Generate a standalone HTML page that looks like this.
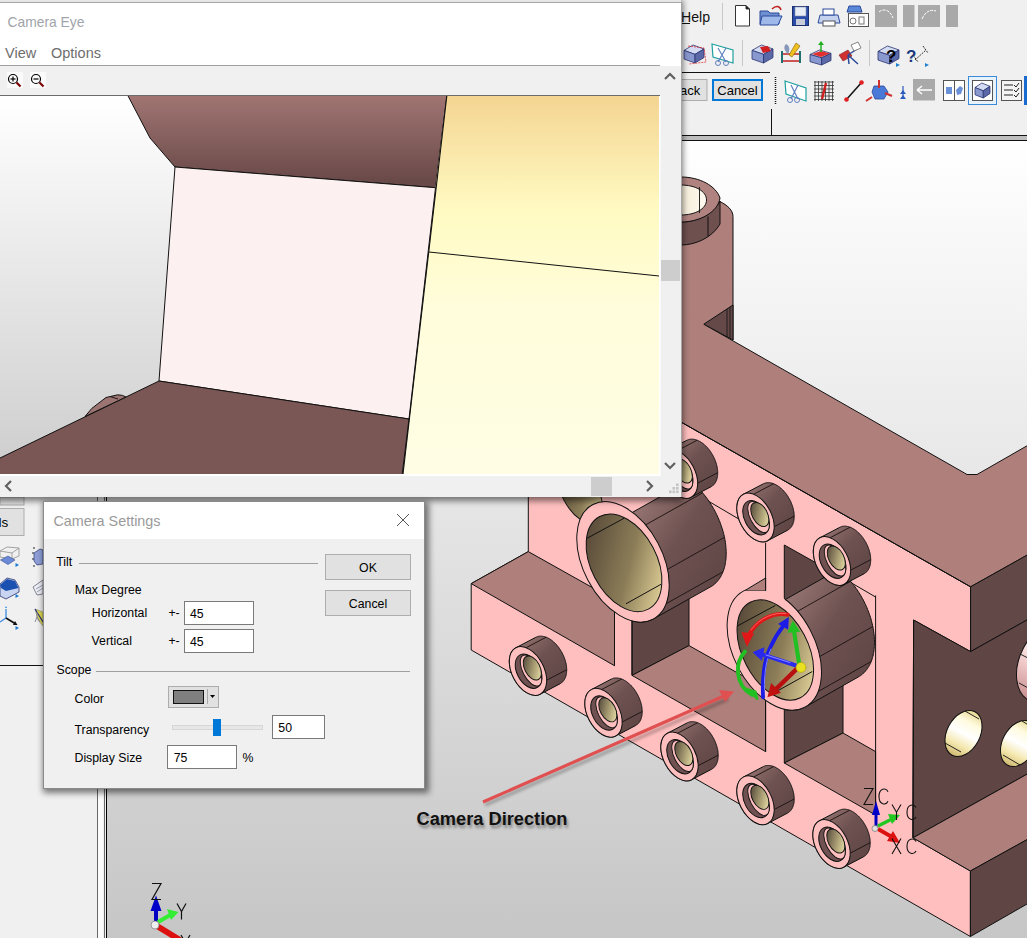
<!DOCTYPE html>
<html><head><meta charset="utf-8">
<style>
html,body{margin:0;padding:0;width:1027px;height:938px;overflow:hidden;background:#f0f0f0}
svg{display:block;position:absolute;left:0;top:0}
text{font-family:"Liberation Sans",sans-serif}
</style></head><body>
<svg width="1027" height="938" viewBox="0 0 1027 938">
<defs>
<linearGradient id="vpg" x1="0" y1="141" x2="0" y2="938" gradientUnits="userSpaceOnUse">
<stop offset="0" stop-color="#ffffff"/><stop offset="0.25" stop-color="#f1f1f1"/><stop offset="1" stop-color="#c6c6c6"/>
</linearGradient>
<linearGradient id="ceg" x1="0" y1="96" x2="0" y2="474" gradientUnits="userSpaceOnUse">
<stop offset="0" stop-color="#ffffff"/><stop offset="1" stop-color="#cdcdcd"/>
</linearGradient>
<linearGradient id="cebr" x1="0" y1="96" x2="0" y2="180" gradientUnits="userSpaceOnUse">
<stop offset="0" stop-color="#a07572"/><stop offset="1" stop-color="#6a4a49"/>
</linearGradient>
<linearGradient id="ceye" x1="0" y1="96" x2="0" y2="474" gradientUnits="userSpaceOnUse">
<stop offset="0" stop-color="#f4d592"/><stop offset="0.3" stop-color="#fffac2"/><stop offset="0.55" stop-color="#fffdda"/><stop offset="1" stop-color="#fffde4"/>
</linearGradient>
<linearGradient id="cyl" x1="0" y1="0" x2="1" y2="1">
<stop offset="0" stop-color="#a27f7c"/><stop offset="0.45" stop-color="#6e5251"/><stop offset="1" stop-color="#5a4241"/>
</linearGradient>
<linearGradient id="olv" x1="0.2" y1="0.1" x2="0.8" y2="0.95">
<stop offset="0" stop-color="#5a4c3a"/><stop offset="0.55" stop-color="#8c7d58"/><stop offset="1" stop-color="#e0d098"/>
</linearGradient>
<linearGradient id="olvs" x1="0.2" y1="0.1" x2="0.8" y2="0.95">
<stop offset="0" stop-color="#5c5040"/><stop offset="0.6" stop-color="#b0a578"/><stop offset="1" stop-color="#e8dca8"/>
</linearGradient>
<linearGradient id="crm" x1="0" y1="0" x2="1" y2="0">
<stop offset="0" stop-color="#f5ecd8"/><stop offset="1" stop-color="#fffaf0"/>
</linearGradient>
<linearGradient id="hol" x1="0" y1="0" x2="0" y2="1">
<stop offset="0" stop-color="#e8d890"/><stop offset="0.25" stop-color="#fffbe0"/><stop offset="0.5" stop-color="#ffffff"/><stop offset="0.75" stop-color="#f4e8b0"/><stop offset="1" stop-color="#d0b870"/>
</linearGradient>
<linearGradient id="holp" x1="0" y1="0" x2="0" y2="1">
<stop offset="0" stop-color="#f0e0c0"/><stop offset="0.3" stop-color="#ffffff"/><stop offset="0.65" stop-color="#f0c8c8"/><stop offset="1" stop-color="#c89090"/>
</linearGradient>
<filter id="shd" x="-10%" y="-10%" width="120%" height="120%"><feGaussianBlur stdDeviation="2.5"/></filter>
<filter id="shd2" x="-10%" y="-10%" width="120%" height="120%"><feGaussianBlur stdDeviation="3.2"/></filter>
</defs>

<!-- left panel & viewport -->
<rect x="0" y="0" width="1027" height="938" fill="#f0f0f0"/>
<rect x="107" y="141" width="920" height="797" fill="url(#vpg)"/>
<rect x="97" y="141" width="1" height="797" fill="#6a6a6a"/>
<rect x="98" y="141" width="5" height="797" fill="#fbfbfb"/>
<rect x="104" y="141" width="1" height="797" fill="#6a6a6a"/>
<rect x="106" y="141" width="1" height="797" fill="#000"/>
<rect x="0" y="665" width="43" height="1" fill="#111"/>

<!-- toolbar region -->
<rect x="681" y="0" width="346" height="135" fill="#f0f0f0"/>
<rect x="681" y="135" width="346" height="1" fill="#111"/>
<rect x="681" y="136" width="346" height="4" fill="#bdbdbd"/>
<rect x="681" y="140" width="346" height="1" fill="#111"/>
<g id="toolbar">
<text x="681" y="21.6" font-size="14.5" fill="#111" textLength="29" lengthAdjust="spacingAndGlyphs">Help</text>
<rect x="681" y="23" width="9" height="1" fill="#111"/>
<rect x="722" y="3" width="1" height="27" fill="#c8c8c8"/>
<!-- row1 -->
<path d="M735.5,5.5 L746,5.5 L749.5,9 L749.5,26 L735.5,26 Z" fill="#fff" stroke="#333" stroke-width="1"/>
<path d="M746,5.5 L746,9 L749.5,9" fill="#111" stroke="#333"/>
<path d="M760,11 L768,11 L770,13 L779,13 L779,24 L760,24 Z" fill="#6f8fd0" stroke="#2a4a9a"/>
<path d="M762,16 L782,16 L778,25 L760,25 Z" fill="#9fb8ea" stroke="#2a4a9a"/>
<path d="M772,9 C776,5 780,6 781,10" fill="none" stroke="#c02020" stroke-width="1.5"/>
<rect x="792.5" y="6.5" width="16" height="19" fill="#2b4ba8" stroke="#1a2f70"/>
<rect x="795" y="7" width="11" height="9" fill="#e8ecf4" stroke="#8090b0" stroke-width="0.6"/>
<rect x="796" y="19" width="9" height="6" fill="#c8ccd8"/>
<path d="M820,15 L838,15 L840,23 L818,23 Z" fill="#c4d2f0" stroke="#2a4a9a"/>
<rect x="823" y="9" width="11" height="6" fill="#fff" stroke="#2a4a9a"/>
<rect x="823" y="21" width="12" height="5" fill="#fff" stroke="#555"/>
<rect x="848.5" y="13.5" width="20" height="13" fill="#fff" stroke="#555"/>
<path d="M849,6 L860,6 L862,12 L847,12 Z" fill="#5a88d8" stroke="#2a4a9a"/>
<circle cx="853" cy="21" r="3" fill="none" stroke="#777"/>
<rect x="859" y="17" width="5" height="7" fill="none" stroke="#777"/>
<rect x="875" y="5" width="22" height="22" fill="#a9a9a9"/>
<path d="M879,12 C884,8 890,10 893,18" fill="none" stroke="#fff" stroke-width="1" stroke-dasharray="3,1"/>
<rect x="903" y="5" width="11.5" height="22" fill="#a9a9a9"/>
<rect x="918" y="5" width="22" height="22" fill="#a9a9a9"/>
<path d="M922,19 C925,12 930,9 936,11" fill="none" stroke="#fff" stroke-width="1" stroke-dasharray="3,1"/>
<rect x="946" y="5" width="12" height="22" fill="#a9a9a9"/>
<!-- row2 -->
<path d="M684,50.4 L693.0,45 L704,48.96 L695.0,54.36 Z" fill="#d4dcf4" stroke="#2a3470" stroke-width="0.8"/><path d="M684,50.4 L695.0,54.36 L695.0,63 L684,59.04 Z" fill="#8a98d0" stroke="#2a3470" stroke-width="0.8"/><path d="M695.0,54.36 L704,48.96 L704,57.6 L695.0,63 Z" fill="#5a68a8" stroke="#2a3470" stroke-width="0.8"/>
<path d="M688,46 L704,48 L706,62 L689,64" fill="none" stroke="#e03030" stroke-width="0.8" stroke-dasharray="2,1"/>
<path d="M712,44 L733,50 L733,63 L713,57 Z" fill="#fff" stroke="#20a0a0" stroke-width="1.2"/>
<path d="M718,48 L726,62 M726,48 L718,62" stroke="#6080c0" stroke-width="1.2"/>
<circle cx="718" cy="63" r="2.5" fill="none" stroke="#6080c0"/><circle cx="726" cy="63" r="2.5" fill="none" stroke="#6080c0"/>
<rect x="742" y="40" width="1" height="26" fill="#c8c8c8"/>
<path d="M752,50.4 L761.45,45 L773,48.96 L763.55,54.36 Z" fill="#d4dcf4" stroke="#2a3470" stroke-width="0.8"/><path d="M752,50.4 L763.55,54.36 L763.55,63 L752,59.04 Z" fill="#8a98d0" stroke="#2a3470" stroke-width="0.8"/><path d="M763.55,54.36 L773,48.96 L773,57.6 L763.55,63 Z" fill="#5a68a8" stroke="#2a3470" stroke-width="0.8"/><path d="M760,47 L768,46 L771,51 L763,53 Z" fill="#d02020"/>
<path d="M781,54 L800,54 M781,61 L800,61" stroke="#c02020" stroke-width="1.5"/>
<rect x="781" y="51" width="2" height="12" fill="#207070"/><rect x="799" y="51" width="2" height="12" fill="#207070"/>
<path d="M786,44 C782,48 786,52 788,54 C790,50 790,46 786,44" fill="#8898b8"/>
<path d="M796,43 L800,46 L792,57 L789,55 Z" fill="#f0c020" stroke="#806000" stroke-width="0.6"/>
<path d="M810,54.5 L819.45,50 L831,53.3 L821.55,57.8 Z" fill="#d4dcf4" stroke="#2a3470" stroke-width="0.8"/><path d="M810,54.5 L821.55,57.8 L821.55,65 L810,61.7 Z" fill="#8a98d0" stroke="#2a3470" stroke-width="0.8"/><path d="M821.55,57.8 L831,53.3 L831,60.5 L821.55,65 Z" fill="#5a68a8" stroke="#2a3470" stroke-width="0.8"/><path d="M812,54 L821,51 L830,53.5 L821,57 Z" fill="#e03030"/>
<path d="M821,52 L821,43" stroke="#22b022" stroke-width="1.5"/><path d="M818,45 L821,41 L824,45 Z" fill="#22b022"/>
<path d="M839,55 L848,50 L852,56 L843,61 Z" fill="#d03030" stroke="#802020" stroke-width="0.6"/>
<path d="M848,55 L857,49 M848,55 L849,64 M848,55 L858,64" stroke="#2a4a9a" stroke-width="1.5"/>
<path d="M851,45 L858,42 L861,48 L854,51 Z" fill="#fff" stroke="#555" stroke-width="0.7"/>
<rect x="869" y="40" width="1" height="26" fill="#c8c8c8"/>
<path d="M878,51.4 L887.45,46 L899,49.96 L889.55,55.36 Z" fill="#d4dcf4" stroke="#2a3470" stroke-width="0.8"/><path d="M878,51.4 L889.55,55.36 L889.55,64 L878,60.04 Z" fill="#8a98d0" stroke="#2a3470" stroke-width="0.8"/><path d="M889.55,55.36 L899,49.96 L899,58.6 L889.55,64 Z" fill="#5a68a8" stroke="#2a3470" stroke-width="0.8"/>
<text x="886" y="62" font-size="17" font-weight="bold" fill="#000">?</text>
<path d="M896,63 L900,65 L896,67 Z" fill="#2080d0"/>
<text x="906" y="62" font-size="17" font-weight="bold" fill="#1a3a80">?</text>
<path d="M915,60 L926,50 M913,55 L918,62 M923,46 L928,53" stroke="#333" stroke-width="1" stroke-dasharray="2,1"/>
<path d="M925,63 L929,65 L925,67 Z" fill="#2080d0"/>
<!-- row3 -->
<rect x="681" y="72" width="89" height="1" fill="#111"/>
<rect x="681" y="79.5" width="26" height="21" fill="#e1e1e1" stroke="#adadad"/>
<text x="680" y="95" font-size="13" fill="#000">ack</text>
<rect x="713" y="80" width="49" height="20" fill="#e1e1e1" stroke="#0078d7" stroke-width="2"/>
<text x="737.5" y="95" font-size="13" fill="#000" text-anchor="middle">Cancel</text>
<rect x="771" y="109" width="1" height="27" fill="#111"/>
<path d="M775.5,77 L775.5,104" stroke="#111" stroke-width="1.5" stroke-dasharray="1,1"/>
<path d="M785,81 L806,88 L806,101 L786,94 Z" fill="#fff" stroke="#20a0a0" stroke-width="1.2"/>
<path d="M791,85 L798,99 M798,85 L791,99" stroke="#6080c0" stroke-width="1.2"/>
<circle cx="790" cy="100" r="2.5" fill="none" stroke="#6080c0"/><circle cx="797" cy="100" r="2.5" fill="none" stroke="#6080c0"/>
<g stroke="#333" stroke-width="0.8">
<path d="M814,82 L834,82 M814,85.5 L834,85.5 M814,89 L834,89 M814,92.5 L834,92.5 M814,96 L834,96 M814,99.5 L834,99.5"/>
<path d="M815,81 L815,101 M818.5,81 L818.5,101 M822,81 L822,101 M825.5,81 L825.5,101 M829,81 L829,101 M832.5,81 L832.5,101"/>
</g>
<path d="M826,83 L822,99" stroke="#d02020" stroke-width="2.5"/>
<path d="M846,100 L862,82" stroke="#111" stroke-width="1.5"/>
<circle cx="846.5" cy="99.5" r="2.3" fill="#e02020"/><circle cx="861.5" cy="82.5" r="2.3" fill="#e02020"/>
<path d="M874,86 L884,86 L888,92 L884,99 L875,99 L872,92 Z" fill="#4a7ad8" stroke="#2a4a9a" stroke-width="0.8"/>
<path d="M879,80 L879,88 M872,97 L866,101 M885,93 L892,96" stroke="#d03030" stroke-width="2"/>
<path d="M903,90 L900,94 L906,94 Z M903,95 L900,99 L906,99 Z" fill="#2a5ac0"/>
<path d="M903,86 L903,96" stroke="#2a5ac0" stroke-width="1.2"/>
<rect x="913" y="79" width="22" height="21.5" fill="#a9a9a9"/>
<path d="M917,90 L932,90 M917,90 L922,86 M917,90 L922,94" stroke="#fff" stroke-width="1.5"/>
<rect x="943.5" y="80.5" width="21" height="20" fill="#fff" stroke="#555"/>
<rect x="954" y="80" width="1" height="21" fill="#555"/>
<rect x="946" y="87" width="6" height="7" fill="#6a90d8"/><path d="M956,90 L960,86 L963,88 L961,94 L957,95 Z" fill="#6a90d8"/>
<rect x="968.5" y="76.5" width="28" height="28" fill="#e8f2fb" stroke="#3a8ad8" stroke-width="1"/>
<rect x="972.5" y="80.5" width="20" height="20" fill="#fff" stroke="#555"/>
<path d="M975,87.5 L981.75,83 L990,86.3 L983.25,90.8 Z" fill="#d4dcf4" stroke="#2a3470" stroke-width="0.8"/><path d="M975,87.5 L983.25,90.8 L983.25,98 L975,94.7 Z" fill="#8a98d0" stroke="#2a3470" stroke-width="0.8"/><path d="M983.25,90.8 L990,86.3 L990,93.5 L983.25,98 Z" fill="#5a68a8" stroke="#2a3470" stroke-width="0.8"/>
<rect x="1001.5" y="80.5" width="20" height="20" fill="#f4f4f4" stroke="#555"/>
<path d="M1004,85 L1013,85 M1004,90 L1013,90 M1004,95 L1013,95" stroke="#222" stroke-width="1.2"/>
<path d="M1014,85 L1016,87 L1019,83 M1014,90 L1016,92 L1019,88 M1014,95 L1016,97 L1019,93" stroke="#222" stroke-width="1" fill="none"/>
<rect x="1024" y="76" width="3" height="29" fill="#1a6ad0"/>
</g>

<!-- MODEL -->
<g id="model">
<polygon points="528.3,480.0 528.3,551.6 471.2,583.6 471.2,650.0 970.4,936.5 970.4,871.0 913.0,837.8 913.6,620.0 970.6,651.6 970.6,586.8 681.0,422.0 681.0,480.0" fill="#ffbfbf" stroke="#111" stroke-width="1"/>
<polygon points="681.0,290.0 703.8,324.2 964.8,473.2 967.0,474.5 977.0,474.5 1027.0,445.8 1027.0,555.2 970.6,586.8 681.0,422.0" fill="#ae7f7b"/>
<polyline points="703.8,324.2 964.8,473.2 967.0,474.5 977.0,474.5 1027.0,445.8" fill="none" stroke="#111" stroke-width="1"/>
<polyline points="1027.0,555.2 970.6,586.8 681.0,422.0" fill="none" stroke="#111" stroke-width="1"/>
<path d="M681,177 C700,177 716,186 720,198 L720,201.6 C727,205 733,210 733,216.5 L733,340 L703.8,324.2 L681,312 Z" fill="#ae7f7b"/>
<path d="M720,201.6 C727,205 733,210 733,216.5 L733,340" fill="none" stroke="#111" stroke-width="1"/>
<polygon points="703.8,324.2 733,305 733,340" fill="#654948" stroke="#111" stroke-width="1"/>
<g stroke="#111" stroke-width="0.8"><line x1="727" y1="309" x2="727" y2="337"/><line x1="730" y1="307" x2="730" y2="339"/></g>
<path d="M681,222 C695,222 712,216 720,201 L720,224 C712,238 695,245 681,245 Z" fill="#6e504f" stroke="#111" stroke-width="1"/>
<line x1="708" y1="216.5" x2="708" y2="236.5" stroke="#111" stroke-width="1"/>
<path d="M681,177 C700,177 716,186 720,198 C718,212 700,222 681,222 Z" fill="#b08380" stroke="#111" stroke-width="1"/>
<path d="M681,185 C695,185 706.5,191 706.5,200 C706.5,209 695,215 681,215 Z" fill="url(#crm)" stroke="#111" stroke-width="1"/>
<line x1="699.5" y1="187" x2="699.5" y2="213" stroke="#111" stroke-width="0.9"/>
<line x1="681" y1="422" x2="970.6" y2="586.8" stroke="#111" stroke-width="1"/>
<polygon points="970.6,586.8 1030.0,553.5 1030.0,618.3 970.6,651.6" fill="#624846" stroke="#111" stroke-width="1"/>
<polygon points="913.6,620.0 970.6,651.6 1030.0,618.3 1030.0,772.5 913.0,837.8" fill="#5f4544" stroke="#111" stroke-width="1"/>
<ellipse cx="963.5" cy="733.5" rx="16.5" ry="24.5" transform="rotate(27.7 963.5 733.5)" fill="url(#hol)" stroke="#111" stroke-width="1"/>
<path d="M965,711 L979,719 M945,743 L961,752" stroke="#111" stroke-width="0.9"/>
<ellipse cx="1019.0" cy="743.5" rx="16.5" ry="24.5" transform="rotate(27.7 1019.0 743.5)" fill="url(#hol)" stroke="#111" stroke-width="1"/>
<path d="M1003,755 L1020,765 M1022,721 L1030,726" stroke="#111" stroke-width="0.9"/>
<ellipse cx="1050.0" cy="662.0" rx="30.0" ry="44.0" transform="rotate(27.7 1050.0 662.0)" fill="url(#holp)" stroke="#111" stroke-width="1"/>
<path d="M1020,654 L1030,659 M1019,683 L1030,689" stroke="#111" stroke-width="0.9"/>
<polygon points="913.0,837.8 1030.0,772.5 1030.0,838.0 970.4,871.0" fill="#ae7f7b" stroke="#111" stroke-width="1"/>
<polygon points="970.4,871.0 1030.0,838.0 1030.0,902.3 970.4,936.5" fill="#5f4544" stroke="#111" stroke-width="1"/>
<polygon points="471.2,583.6 528.3,551.6 614.5,600.0 614.5,665.7" fill="#ae7f7b" stroke="#111" stroke-width="1"/>
<polygon points="632.0,560.0 689.0,560.0 689.0,645.6 632.0,675.4" fill="#5f4544" stroke="#111" stroke-width="1"/>
<polygon points="632.0,675.4 689.0,645.6 765.6,688.7 765.6,751.6" fill="#ae7f7b" stroke="#111" stroke-width="1"/>
<line x1="765.6" y1="542.7" x2="765.6" y2="752" stroke="#111" stroke-width="1"/>
<line x1="698" y1="495" x2="738.4" y2="518.8" stroke="#111" stroke-width="1"/>
<polygon points="784.3,545.0 843.0,578.0 843.0,733.0 784.3,763.0" fill="#5f4544" stroke="#111" stroke-width="1"/>
<polygon points="784.3,763.0 843.0,733.0 875.6,751.6 875.6,815.0" fill="#ae7f7b" stroke="#111" stroke-width="1"/>
<line x1="875.6" y1="595.5" x2="875.6" y2="815" stroke="#111" stroke-width="1"/>
<line x1="843" y1="578" x2="875.6" y2="597" stroke="#111" stroke-width="1"/>
<line x1="913.6" y1="620" x2="913" y2="837.8" stroke="#111" stroke-width="1"/>
<line x1="614.5" y1="600" x2="614.5" y2="665.7" stroke="#111" stroke-width="1"/>
<line x1="632" y1="600" x2="632" y2="675.4" stroke="#111" stroke-width="1"/>
<ellipse cx="580.0" cy="492.0" rx="18.0" ry="34.0" transform="rotate(-27.7 580.0 492.0)" fill="url(#olv)" stroke="#111" stroke-width="1"/>
<polygon points="632.5,512.3 689.5,480.3 690.7,481.2 691.8,482.2 693.0,483.1 694.2,484.2 695.3,485.2 696.4,486.3 697.6,487.4 698.7,488.5 699.8,489.7 700.9,490.9 701.9,492.1 703.0,493.3 704.0,494.6 705.1,495.9 706.1,497.2 707.1,498.5 708.0,499.9 709.0,501.3 709.9,502.7 710.8,504.1 711.7,505.5 712.6,507.0 713.4,508.4 714.3,509.9 715.1,511.4 715.8,512.9 716.6,514.4 717.3,515.9 718.0,517.5 718.7,519.0 719.3,520.6 720.0,522.1 720.5,523.7 721.1,525.3 721.6,526.9 722.2,528.4 722.6,530.0 723.1,531.6 723.5,533.2 723.9,534.7 724.3,536.3 724.6,537.9 724.9,539.4 725.2,541.0 725.4,542.5 725.6,544.1 725.8,545.6 725.9,547.1 726.0,548.6 726.1,550.1 726.2,551.6 726.2,553.0 726.2,554.5 726.1,555.9 726.1,557.3 726.0,558.7 725.8,560.1 725.6,561.4 725.4,562.8 725.2,564.1 725.0,565.4 724.7,566.6 724.3,567.8 724.0,569.1 723.6,570.2 723.2,571.4 722.7,572.5 722.3,573.6 721.7,574.7 721.2,575.7 720.7,576.7 720.1,577.7 719.5,578.6 718.8,579.5 718.1,580.4 717.4,581.2 716.7,582.0 716.0,582.8 715.2,583.5 714.4,584.2 713.6,584.9 712.8,585.5 711.9,586.1 711.0,586.6 654.0,618.6 653.1,619.1 652.2,619.6 651.2,620.0 650.2,620.4 649.3,620.7 648.3,621.0 647.2,621.3 646.2,621.5 645.1,621.7 644.1,621.8 643.0,621.9 641.9,622.0 640.8,622.0 639.7,622.0 638.5,621.9 637.4,621.8 636.2,621.6 635.1,621.5 633.9,621.2 632.7,621.0" fill="url(#cyl)" stroke="#111" stroke-width="1"/>
<line x1="645.6" y1="524.9" x2="702.6" y2="492.9" stroke="#1a1010" stroke-width="0.9"/>
<line x1="667.5" y1="569.3" x2="724.5" y2="537.3" stroke="#1a1010" stroke-width="0.9"/>
<line x1="666.0" y1="603.8" x2="723.0" y2="571.8" stroke="#1a1010" stroke-width="0.9"/>
<ellipse cx="623.0" cy="561.8" rx="39.6" ry="64.7" transform="rotate(-27.7 623.0 561.8)" fill="#ffbfbf" stroke="#111" stroke-width="1"/>
<ellipse cx="624.0" cy="562.8" rx="32.8" ry="52.3" transform="rotate(-27.7 624.0 562.8)" fill="url(#olv)" stroke="#111" stroke-width="1"/>
<line x1="586.0" y1="538.8" x2="624.0" y2="518.3" stroke="#111" stroke-width="1"/>
<line x1="626.0" y1="603.8" x2="661.0" y2="584.3" stroke="#111" stroke-width="1"/>
<polygon points="785.2,709.4 785.4,599.5 838.4,569.5 839.6,570.5 840.8,571.5 842.0,572.5 843.2,573.5 844.3,574.6 845.5,575.7 846.6,576.9 847.7,578.1 848.8,579.3 849.9,580.5 851.0,581.8 852.1,583.1 853.1,584.4 854.1,585.7 855.1,587.0 856.1,588.4 857.1,589.8 858.0,591.2 859.0,592.7 859.9,594.1 860.8,595.6 861.6,597.1 862.5,598.6 863.3,600.1 864.1,601.6 864.8,603.2 865.6,604.7 866.3,606.3 867.0,607.9 867.6,609.5 868.2,611.0 868.8,612.6 869.4,614.2 870.0,615.8 870.5,617.4 871.0,619.0 871.4,620.6 871.8,622.2 872.2,623.8 872.6,625.4 872.9,627.0 873.2,628.6 873.5,630.2 873.7,631.8 873.9,633.3 874.1,634.9 874.3,636.4 874.4,637.9 874.4,639.5 874.5,641.0 874.5,642.4 874.5,643.9 874.4,645.4 874.3,646.8 874.2,648.2 874.1,649.6 873.9,651.0 873.7,652.4 873.4,653.7 873.2,655.0 872.9,656.3 872.5,657.5 872.2,658.8 871.8,660.0 871.3,661.1 870.9,662.3 870.4,663.4 869.9,664.5 869.3,665.6 868.7,666.6 868.1,667.6 867.5,668.5 866.8,669.5 866.1,670.3 865.4,671.2 864.7,672.0 863.9,672.8 863.1,673.5 862.3,674.3 861.5,674.9 860.6,675.6 859.7,676.1 858.8,676.7 805.8,706.7 804.9,707.2 803.9,707.7 802.9,708.1 801.9,708.5 800.9,708.9 799.9,709.2 798.9,709.5 797.8,709.7 796.7,709.9 795.6,710.0 794.5,710.1 793.4,710.2 792.3,710.2 791.1,710.2 789.9,710.1 788.8,710.0 787.6,709.9 786.4,709.7" fill="url(#cyl)" stroke="#111" stroke-width="1"/>
<line x1="797.6" y1="611.3" x2="850.6" y2="581.3" stroke="#1a1010" stroke-width="0.9"/>
<line x1="819.8" y1="656.5" x2="872.8" y2="626.5" stroke="#1a1010" stroke-width="0.9"/>
<line x1="818.2" y1="691.5" x2="871.2" y2="661.5" stroke="#1a1010" stroke-width="0.9"/>
<clipPath id="cutc"><path clip-rule="evenodd" d="M0,0 H1100 V1000 H0 Z M745,572 V602 H784.6 V572 Z"/></clipPath>
<ellipse cx="774.3" cy="649.0" rx="40.6" ry="65.7" transform="rotate(-27.7 774.3 649.0)" fill="#ffbfbf"/>
<g clip-path="url(#cutc)"><ellipse cx="774.3" cy="649.0" rx="40.6" ry="65.7" transform="rotate(-27.7 774.3 649.0)" fill="none" stroke="#111" stroke-width="1"/></g>
<line x1="745" y1="590.2" x2="765.6" y2="590.2" stroke="#111" stroke-width="1"/>
<ellipse cx="775.3" cy="650.0" rx="32.6" ry="54.0" transform="rotate(-27.7 775.3 650.0)" fill="url(#olv)" stroke="#111" stroke-width="1"/>
<line x1="737.3" y1="626.0" x2="775.3" y2="605.5" stroke="#111" stroke-width="1"/>
<line x1="777.3" y1="691.0" x2="812.3" y2="671.5" stroke="#111" stroke-width="1"/>
<polygon points="509.3,661.6 509.3,661.0 509.3,660.5 509.4,659.9 509.4,659.3 509.5,658.8 509.5,658.2 509.6,657.7 509.7,657.1 509.8,656.6 509.9,656.1 510.1,655.6 510.2,655.1 510.4,654.7 510.5,654.2 510.7,653.7 510.9,653.3 511.1,652.9 511.3,652.4 511.6,652.0 511.8,651.6 512.0,651.3 512.3,650.9 512.6,650.5 512.9,650.2 513.1,649.9 513.4,649.6 513.8,649.3 514.1,649.0 514.4,648.7 514.8,648.5 515.1,648.2 515.5,648.0 515.8,647.8 535.8,637.3 536.2,637.1 536.6,637.0 537.0,636.8 537.4,636.7 537.8,636.5 538.2,636.4 538.6,636.3 539.0,636.3 539.5,636.2 539.9,636.2 540.4,636.2 540.8,636.2 541.3,636.2 541.7,636.2 542.2,636.2 542.7,636.3 543.1,636.4 543.6,636.5 544.1,636.6 544.6,636.7 545.0,636.8 545.5,637.0 546.0,637.2 546.5,637.4 547.0,637.6 547.5,637.8 548.0,638.0 548.5,638.3 548.9,638.6 549.4,638.8 549.9,639.1 550.4,639.4 550.9,639.8 551.4,640.1 551.9,640.5 552.3,640.8 552.8,641.2 553.3,641.6 553.7,642.0 554.2,642.5 554.7,642.9 555.1,643.3 555.6,643.8 556.0,644.3 556.5,644.7 556.9,645.2 557.3,645.7 557.7,646.2 558.2,646.8 558.6,647.3 559.0,647.8 559.4,648.4 559.7,648.9 560.1,649.5 560.5,650.1 560.8,650.7 561.2,651.3 561.5,651.8 561.9,652.4 562.2,653.0 562.5,653.7 562.8,654.3 563.1,654.9 563.4,655.5 563.7,656.1 563.9,656.8 564.2,657.4 564.4,658.0 564.6,658.7 564.9,659.3 565.1,659.9 565.3,660.6 565.4,661.2 565.6,661.8 565.8,662.5 565.9,663.1 566.1,663.8 566.2,664.4 566.3,665.0 566.4,665.6 566.5,666.3 566.5,666.9 566.6,667.5 566.6,668.1 566.7,668.7 566.7,669.3 566.7,669.9 566.7,670.5 566.7,671.0 566.6,671.6 566.6,672.2 566.5,672.7 566.5,673.3 566.4,673.8 566.3,674.4 566.2,674.9 566.1,675.4 565.9,675.9 565.8,676.4 565.6,676.8 565.5,677.3 565.3,677.8 565.1,678.2 564.9,678.6 564.7,679.1 564.4,679.5 564.2,679.9 564.0,680.2 563.7,680.6 563.4,681.0 563.1,681.3 562.9,681.6 562.6,681.9 562.2,682.2 561.9,682.5 561.6,682.8 561.2,683.0 560.9,683.3 560.5,683.5 560.2,683.7 540.2,694.2 539.8,694.4 539.4,694.5 539.0,694.7 538.6,694.8 538.2,695.0 537.8,695.1 537.4,695.2 537.0,695.2 536.5,695.3 536.1,695.3 535.6,695.3 535.2,695.3 534.7,695.3 534.3,695.3 533.8,695.3 533.3,695.2 532.9,695.1 532.4,695.0 531.9,694.9 531.4,694.8 531.0,694.7 530.5,694.5 530.0,694.3 529.5,694.1 529.0,693.9 528.5,693.7 528.0,693.5 527.5,693.2 527.1,692.9 526.6,692.7 526.1,692.4 525.6,692.1 525.1,691.7 524.6,691.4 524.1,691.0 523.7,690.7 523.2,690.3 522.7,689.9 522.3,689.5 521.8,689.0 521.3,688.6 520.9,688.2 520.4,687.7 520.0,687.2 519.5,686.8 519.1,686.3 518.7,685.8 518.3,685.3 517.8,684.7 517.4,684.2 517.0,683.7 516.6,683.1 516.3,682.6 515.9,682.0 515.5,681.4 515.2,680.8 514.8,680.2 514.5,679.7 514.1,679.1 513.8,678.5 513.5,677.8 513.2,677.2 512.9,676.6 512.6,676.0 512.3,675.4 512.1,674.7 511.8,674.1 511.6,673.5 511.4,672.8 511.1,672.2 510.9,671.6 510.7,670.9 510.6,670.3 510.4,669.7 510.2,669.0 510.1,668.4 509.9,667.7 509.8,667.1 509.7,666.5 509.6,665.9 509.5,665.2 509.5,664.6 509.4,664.0 509.4,663.4 509.3,662.8 509.3,662.2" fill="url(#cyl)" stroke="#111" stroke-width="1"/>
<line x1="526.2" y1="647.7" x2="546.2" y2="637.2" stroke="#1a1010" stroke-width="0.9"/>
<line x1="546.7" y1="680.2" x2="566.7" y2="669.7" stroke="#1a1010" stroke-width="0.9"/>
<ellipse cx="528.0" cy="671.0" rx="16.0" ry="26.2" transform="rotate(-27.7 528.0 671.0)" fill="#ffbfbf" stroke="#111" stroke-width="1"/>
<ellipse cx="528.6" cy="671.2" rx="11.6" ry="18.4" transform="rotate(-27.7 528.6 671.2)" fill="#6e5150" stroke="#111" stroke-width="1"/>
<ellipse cx="531.0" cy="670.5" rx="8.2" ry="17.0" transform="rotate(-27.7 531.0 670.5)" fill="#ffbfbf" stroke="#111" stroke-width="0.9"/>
<ellipse cx="532.3" cy="668.0" rx="7.6" ry="13.0" transform="rotate(-27.7 532.3 668.0)" fill="url(#olvs)" stroke="#111" stroke-width="0.9"/>
<polygon points="584.8,703.4 584.8,702.8 584.8,702.3 584.9,701.7 584.9,701.1 585.0,700.6 585.0,700.0 585.1,699.5 585.2,698.9 585.3,698.4 585.4,697.9 585.6,697.4 585.7,696.9 585.9,696.5 586.0,696.0 586.2,695.5 586.4,695.1 586.6,694.7 586.8,694.2 587.1,693.8 587.3,693.4 587.5,693.1 587.8,692.7 588.1,692.3 588.4,692.0 588.6,691.7 588.9,691.4 589.3,691.1 589.6,690.8 589.9,690.5 590.3,690.3 590.6,690.0 591.0,689.8 591.3,689.6 611.3,679.1 611.7,678.9 612.1,678.8 612.5,678.6 612.9,678.5 613.3,678.3 613.7,678.2 614.1,678.1 614.5,678.1 615.0,678.0 615.4,678.0 615.9,678.0 616.3,678.0 616.8,678.0 617.2,678.0 617.7,678.0 618.2,678.1 618.6,678.2 619.1,678.3 619.6,678.4 620.1,678.5 620.5,678.6 621.0,678.8 621.5,679.0 622.0,679.2 622.5,679.4 623.0,679.6 623.5,679.8 624.0,680.1 624.4,680.4 624.9,680.6 625.4,680.9 625.9,681.2 626.4,681.6 626.9,681.9 627.4,682.3 627.8,682.6 628.3,683.0 628.8,683.4 629.2,683.8 629.7,684.3 630.2,684.7 630.6,685.1 631.1,685.6 631.5,686.1 632.0,686.5 632.4,687.0 632.8,687.5 633.2,688.0 633.7,688.6 634.1,689.1 634.5,689.6 634.9,690.2 635.2,690.7 635.6,691.3 636.0,691.9 636.3,692.5 636.7,693.1 637.0,693.6 637.4,694.2 637.7,694.8 638.0,695.5 638.3,696.1 638.6,696.7 638.9,697.3 639.2,697.9 639.4,698.6 639.7,699.2 639.9,699.8 640.1,700.5 640.4,701.1 640.6,701.7 640.8,702.4 640.9,703.0 641.1,703.6 641.3,704.3 641.4,704.9 641.6,705.6 641.7,706.2 641.8,706.8 641.9,707.4 642.0,708.1 642.0,708.7 642.1,709.3 642.1,709.9 642.2,710.5 642.2,711.1 642.2,711.7 642.2,712.3 642.2,712.8 642.1,713.4 642.1,714.0 642.0,714.5 642.0,715.1 641.9,715.6 641.8,716.2 641.7,716.7 641.6,717.2 641.4,717.7 641.3,718.2 641.1,718.6 641.0,719.1 640.8,719.6 640.6,720.0 640.4,720.4 640.2,720.9 639.9,721.3 639.7,721.7 639.5,722.0 639.2,722.4 638.9,722.8 638.6,723.1 638.4,723.4 638.1,723.7 637.7,724.0 637.4,724.3 637.1,724.6 636.7,724.8 636.4,725.1 636.0,725.3 635.7,725.5 615.7,736.0 615.3,736.2 614.9,736.3 614.5,736.5 614.1,736.6 613.7,736.8 613.3,736.9 612.9,737.0 612.5,737.0 612.0,737.1 611.6,737.1 611.1,737.1 610.7,737.1 610.2,737.1 609.8,737.1 609.3,737.1 608.8,737.0 608.4,736.9 607.9,736.8 607.4,736.7 606.9,736.6 606.5,736.5 606.0,736.3 605.5,736.1 605.0,735.9 604.5,735.7 604.0,735.5 603.5,735.3 603.0,735.0 602.6,734.7 602.1,734.5 601.6,734.2 601.1,733.9 600.6,733.5 600.1,733.2 599.6,732.8 599.2,732.5 598.7,732.1 598.2,731.7 597.8,731.3 597.3,730.8 596.8,730.4 596.4,730.0 595.9,729.5 595.5,729.0 595.0,728.6 594.6,728.1 594.2,727.6 593.8,727.1 593.3,726.5 592.9,726.0 592.5,725.5 592.1,724.9 591.8,724.4 591.4,723.8 591.0,723.2 590.7,722.6 590.3,722.0 590.0,721.5 589.6,720.9 589.3,720.3 589.0,719.6 588.7,719.0 588.4,718.4 588.1,717.8 587.8,717.2 587.6,716.5 587.3,715.9 587.1,715.3 586.9,714.6 586.6,714.0 586.4,713.4 586.2,712.7 586.1,712.1 585.9,711.5 585.7,710.8 585.6,710.2 585.4,709.5 585.3,708.9 585.2,708.3 585.1,707.7 585.0,707.0 585.0,706.4 584.9,705.8 584.9,705.2 584.8,704.6 584.8,704.0" fill="url(#cyl)" stroke="#111" stroke-width="1"/>
<line x1="601.7" y1="689.5" x2="621.7" y2="679.0" stroke="#1a1010" stroke-width="0.9"/>
<line x1="622.2" y1="722.0" x2="642.2" y2="711.5" stroke="#1a1010" stroke-width="0.9"/>
<ellipse cx="603.5" cy="712.8" rx="16.0" ry="26.2" transform="rotate(-27.7 603.5 712.8)" fill="#ffbfbf" stroke="#111" stroke-width="1"/>
<ellipse cx="604.1" cy="713.0" rx="11.6" ry="18.4" transform="rotate(-27.7 604.1 713.0)" fill="#6e5150" stroke="#111" stroke-width="1"/>
<ellipse cx="606.5" cy="712.3" rx="8.2" ry="17.0" transform="rotate(-27.7 606.5 712.3)" fill="#ffbfbf" stroke="#111" stroke-width="0.9"/>
<ellipse cx="607.8" cy="709.8" rx="7.6" ry="13.0" transform="rotate(-27.7 607.8 709.8)" fill="url(#olvs)" stroke="#111" stroke-width="0.9"/>
<polygon points="660.8,747.1 660.8,746.5 660.8,746.0 660.9,745.4 660.9,744.8 661.0,744.3 661.0,743.7 661.1,743.2 661.2,742.6 661.3,742.1 661.4,741.6 661.6,741.1 661.7,740.6 661.9,740.2 662.0,739.7 662.2,739.2 662.4,738.8 662.6,738.4 662.8,737.9 663.1,737.5 663.3,737.1 663.5,736.8 663.8,736.4 664.1,736.0 664.4,735.7 664.6,735.4 664.9,735.1 665.3,734.8 665.6,734.5 665.9,734.2 666.3,734.0 666.6,733.7 667.0,733.5 667.3,733.3 687.3,722.8 687.7,722.6 688.1,722.5 688.5,722.3 688.9,722.2 689.3,722.0 689.7,721.9 690.1,721.8 690.5,721.8 691.0,721.7 691.4,721.7 691.9,721.7 692.3,721.7 692.8,721.7 693.2,721.7 693.7,721.7 694.2,721.8 694.6,721.9 695.1,722.0 695.6,722.1 696.1,722.2 696.5,722.3 697.0,722.5 697.5,722.7 698.0,722.9 698.5,723.1 699.0,723.3 699.5,723.5 700.0,723.8 700.4,724.1 700.9,724.3 701.4,724.6 701.9,724.9 702.4,725.3 702.9,725.6 703.4,726.0 703.8,726.3 704.3,726.7 704.8,727.1 705.2,727.5 705.7,728.0 706.2,728.4 706.6,728.8 707.1,729.3 707.5,729.8 708.0,730.2 708.4,730.7 708.8,731.2 709.2,731.7 709.7,732.3 710.1,732.8 710.5,733.3 710.9,733.9 711.2,734.4 711.6,735.0 712.0,735.6 712.3,736.2 712.7,736.8 713.0,737.3 713.4,737.9 713.7,738.5 714.0,739.2 714.3,739.8 714.6,740.4 714.9,741.0 715.2,741.6 715.4,742.3 715.7,742.9 715.9,743.5 716.1,744.2 716.4,744.8 716.6,745.4 716.8,746.1 716.9,746.7 717.1,747.3 717.3,748.0 717.4,748.6 717.6,749.3 717.7,749.9 717.8,750.5 717.9,751.1 718.0,751.8 718.0,752.4 718.1,753.0 718.1,753.6 718.2,754.2 718.2,754.8 718.2,755.4 718.2,756.0 718.2,756.5 718.1,757.1 718.1,757.7 718.0,758.2 718.0,758.8 717.9,759.3 717.8,759.9 717.7,760.4 717.6,760.9 717.4,761.4 717.3,761.9 717.1,762.3 717.0,762.8 716.8,763.3 716.6,763.7 716.4,764.1 716.2,764.6 715.9,765.0 715.7,765.4 715.5,765.7 715.2,766.1 714.9,766.5 714.6,766.8 714.4,767.1 714.1,767.4 713.7,767.7 713.4,768.0 713.1,768.3 712.7,768.5 712.4,768.8 712.0,769.0 711.7,769.2 691.7,779.7 691.3,779.9 690.9,780.0 690.5,780.2 690.1,780.3 689.7,780.5 689.3,780.6 688.9,780.7 688.5,780.7 688.0,780.8 687.6,780.8 687.1,780.8 686.7,780.8 686.2,780.8 685.8,780.8 685.3,780.8 684.8,780.7 684.4,780.6 683.9,780.5 683.4,780.4 682.9,780.3 682.5,780.2 682.0,780.0 681.5,779.8 681.0,779.6 680.5,779.4 680.0,779.2 679.5,779.0 679.0,778.7 678.6,778.4 678.1,778.2 677.6,777.9 677.1,777.6 676.6,777.2 676.1,776.9 675.6,776.5 675.2,776.2 674.7,775.8 674.2,775.4 673.8,775.0 673.3,774.5 672.8,774.1 672.4,773.7 671.9,773.2 671.5,772.7 671.0,772.3 670.6,771.8 670.2,771.3 669.8,770.8 669.3,770.2 668.9,769.7 668.5,769.2 668.1,768.6 667.8,768.1 667.4,767.5 667.0,766.9 666.7,766.3 666.3,765.7 666.0,765.2 665.6,764.6 665.3,764.0 665.0,763.3 664.7,762.7 664.4,762.1 664.1,761.5 663.8,760.9 663.6,760.2 663.3,759.6 663.1,759.0 662.9,758.3 662.6,757.7 662.4,757.1 662.2,756.4 662.1,755.8 661.9,755.2 661.7,754.5 661.6,753.9 661.4,753.2 661.3,752.6 661.2,752.0 661.1,751.4 661.0,750.7 661.0,750.1 660.9,749.5 660.9,748.9 660.8,748.3 660.8,747.7" fill="url(#cyl)" stroke="#111" stroke-width="1"/>
<line x1="677.7" y1="733.2" x2="697.7" y2="722.7" stroke="#1a1010" stroke-width="0.9"/>
<line x1="698.2" y1="765.7" x2="718.2" y2="755.2" stroke="#1a1010" stroke-width="0.9"/>
<ellipse cx="679.5" cy="756.5" rx="16.0" ry="26.2" transform="rotate(-27.7 679.5 756.5)" fill="#ffbfbf" stroke="#111" stroke-width="1"/>
<ellipse cx="680.1" cy="756.7" rx="11.6" ry="18.4" transform="rotate(-27.7 680.1 756.7)" fill="#6e5150" stroke="#111" stroke-width="1"/>
<ellipse cx="682.5" cy="756.0" rx="8.2" ry="17.0" transform="rotate(-27.7 682.5 756.0)" fill="#ffbfbf" stroke="#111" stroke-width="0.9"/>
<ellipse cx="683.8" cy="753.5" rx="7.6" ry="13.0" transform="rotate(-27.7 683.8 753.5)" fill="url(#olvs)" stroke="#111" stroke-width="0.9"/>
<polygon points="736.8,790.9 736.8,790.3 736.8,789.8 736.9,789.2 736.9,788.6 737.0,788.1 737.0,787.5 737.1,787.0 737.2,786.4 737.3,785.9 737.4,785.4 737.6,784.9 737.7,784.4 737.9,784.0 738.0,783.5 738.2,783.0 738.4,782.6 738.6,782.2 738.8,781.7 739.1,781.3 739.3,780.9 739.5,780.6 739.8,780.2 740.1,779.8 740.4,779.5 740.6,779.2 740.9,778.9 741.3,778.6 741.6,778.3 741.9,778.0 742.3,777.8 742.6,777.5 743.0,777.3 743.3,777.1 763.3,766.6 763.7,766.4 764.1,766.3 764.5,766.1 764.9,766.0 765.3,765.8 765.7,765.7 766.1,765.6 766.5,765.6 767.0,765.5 767.4,765.5 767.9,765.5 768.3,765.5 768.8,765.5 769.2,765.5 769.7,765.5 770.2,765.6 770.6,765.7 771.1,765.8 771.6,765.9 772.1,766.0 772.5,766.1 773.0,766.3 773.5,766.5 774.0,766.7 774.5,766.9 775.0,767.1 775.5,767.3 776.0,767.6 776.4,767.9 776.9,768.1 777.4,768.4 777.9,768.7 778.4,769.1 778.9,769.4 779.4,769.8 779.8,770.1 780.3,770.5 780.8,770.9 781.2,771.3 781.7,771.8 782.2,772.2 782.6,772.6 783.1,773.1 783.5,773.6 784.0,774.0 784.4,774.5 784.8,775.0 785.2,775.5 785.7,776.1 786.1,776.6 786.5,777.1 786.9,777.7 787.2,778.2 787.6,778.8 788.0,779.4 788.3,780.0 788.7,780.6 789.0,781.1 789.4,781.7 789.7,782.3 790.0,783.0 790.3,783.6 790.6,784.2 790.9,784.8 791.2,785.4 791.4,786.1 791.7,786.7 791.9,787.3 792.1,788.0 792.4,788.6 792.6,789.2 792.8,789.9 792.9,790.5 793.1,791.1 793.3,791.8 793.4,792.4 793.6,793.1 793.7,793.7 793.8,794.3 793.9,794.9 794.0,795.6 794.0,796.2 794.1,796.8 794.1,797.4 794.2,798.0 794.2,798.6 794.2,799.2 794.2,799.8 794.2,800.3 794.1,800.9 794.1,801.5 794.0,802.0 794.0,802.6 793.9,803.1 793.8,803.7 793.7,804.2 793.6,804.7 793.4,805.2 793.3,805.7 793.1,806.1 793.0,806.6 792.8,807.1 792.6,807.5 792.4,807.9 792.2,808.4 791.9,808.8 791.7,809.2 791.5,809.5 791.2,809.9 790.9,810.3 790.6,810.6 790.4,810.9 790.1,811.2 789.7,811.5 789.4,811.8 789.1,812.1 788.7,812.3 788.4,812.6 788.0,812.8 787.7,813.0 767.7,823.5 767.3,823.7 766.9,823.8 766.5,824.0 766.1,824.1 765.7,824.3 765.3,824.4 764.9,824.5 764.5,824.5 764.0,824.6 763.6,824.6 763.1,824.6 762.7,824.6 762.2,824.6 761.8,824.6 761.3,824.6 760.8,824.5 760.4,824.4 759.9,824.3 759.4,824.2 758.9,824.1 758.5,824.0 758.0,823.8 757.5,823.6 757.0,823.4 756.5,823.2 756.0,823.0 755.5,822.8 755.0,822.5 754.6,822.2 754.1,822.0 753.6,821.7 753.1,821.4 752.6,821.0 752.1,820.7 751.6,820.3 751.2,820.0 750.7,819.6 750.2,819.2 749.8,818.8 749.3,818.3 748.8,817.9 748.4,817.5 747.9,817.0 747.5,816.5 747.0,816.1 746.6,815.6 746.2,815.1 745.8,814.6 745.3,814.0 744.9,813.5 744.5,813.0 744.1,812.4 743.8,811.9 743.4,811.3 743.0,810.7 742.7,810.1 742.3,809.5 742.0,809.0 741.6,808.4 741.3,807.8 741.0,807.1 740.7,806.5 740.4,805.9 740.1,805.3 739.8,804.7 739.6,804.0 739.3,803.4 739.1,802.8 738.9,802.1 738.6,801.5 738.4,800.9 738.2,800.2 738.1,799.6 737.9,799.0 737.7,798.3 737.6,797.7 737.4,797.0 737.3,796.4 737.2,795.8 737.1,795.2 737.0,794.5 737.0,793.9 736.9,793.3 736.9,792.7 736.8,792.1 736.8,791.5" fill="url(#cyl)" stroke="#111" stroke-width="1"/>
<line x1="753.7" y1="777.0" x2="773.7" y2="766.5" stroke="#1a1010" stroke-width="0.9"/>
<line x1="774.2" y1="809.5" x2="794.2" y2="799.0" stroke="#1a1010" stroke-width="0.9"/>
<ellipse cx="755.5" cy="800.3" rx="16.0" ry="26.2" transform="rotate(-27.7 755.5 800.3)" fill="#ffbfbf" stroke="#111" stroke-width="1"/>
<ellipse cx="756.1" cy="800.5" rx="11.6" ry="18.4" transform="rotate(-27.7 756.1 800.5)" fill="#6e5150" stroke="#111" stroke-width="1"/>
<ellipse cx="758.5" cy="799.8" rx="8.2" ry="17.0" transform="rotate(-27.7 758.5 799.8)" fill="#ffbfbf" stroke="#111" stroke-width="0.9"/>
<ellipse cx="759.8" cy="797.3" rx="7.6" ry="13.0" transform="rotate(-27.7 759.8 797.3)" fill="url(#olvs)" stroke="#111" stroke-width="0.9"/>
<polygon points="812.8,834.6 812.8,834.0 812.8,833.5 812.9,832.9 812.9,832.3 813.0,831.8 813.0,831.2 813.1,830.7 813.2,830.1 813.3,829.6 813.4,829.1 813.6,828.6 813.7,828.1 813.9,827.7 814.0,827.2 814.2,826.7 814.4,826.3 814.6,825.9 814.8,825.4 815.1,825.0 815.3,824.6 815.5,824.3 815.8,823.9 816.1,823.5 816.4,823.2 816.6,822.9 816.9,822.6 817.3,822.3 817.6,822.0 817.9,821.7 818.3,821.5 818.6,821.2 819.0,821.0 819.3,820.8 839.3,810.3 839.7,810.1 840.1,810.0 840.5,809.8 840.9,809.7 841.3,809.5 841.7,809.4 842.1,809.3 842.5,809.3 843.0,809.2 843.4,809.2 843.9,809.2 844.3,809.2 844.8,809.2 845.2,809.2 845.7,809.2 846.2,809.3 846.6,809.4 847.1,809.5 847.6,809.6 848.1,809.7 848.5,809.8 849.0,810.0 849.5,810.2 850.0,810.4 850.5,810.6 851.0,810.8 851.5,811.0 852.0,811.3 852.4,811.6 852.9,811.8 853.4,812.1 853.9,812.4 854.4,812.8 854.9,813.1 855.4,813.5 855.8,813.8 856.3,814.2 856.8,814.6 857.2,815.0 857.7,815.5 858.2,815.9 858.6,816.3 859.1,816.8 859.5,817.3 860.0,817.7 860.4,818.2 860.8,818.7 861.2,819.2 861.7,819.8 862.1,820.3 862.5,820.8 862.9,821.4 863.2,821.9 863.6,822.5 864.0,823.1 864.3,823.7 864.7,824.3 865.0,824.8 865.4,825.4 865.7,826.0 866.0,826.7 866.3,827.3 866.6,827.9 866.9,828.5 867.2,829.1 867.4,829.8 867.7,830.4 867.9,831.0 868.1,831.7 868.4,832.3 868.6,832.9 868.8,833.6 868.9,834.2 869.1,834.8 869.3,835.5 869.4,836.1 869.6,836.8 869.7,837.4 869.8,838.0 869.9,838.6 870.0,839.3 870.0,839.9 870.1,840.5 870.1,841.1 870.2,841.7 870.2,842.3 870.2,842.9 870.2,843.5 870.2,844.0 870.1,844.6 870.1,845.2 870.0,845.7 870.0,846.3 869.9,846.8 869.8,847.4 869.7,847.9 869.6,848.4 869.4,848.9 869.3,849.4 869.1,849.8 869.0,850.3 868.8,850.8 868.6,851.2 868.4,851.6 868.2,852.1 867.9,852.5 867.7,852.9 867.5,853.2 867.2,853.6 866.9,854.0 866.6,854.3 866.4,854.6 866.1,854.9 865.7,855.2 865.4,855.5 865.1,855.8 864.7,856.0 864.4,856.3 864.0,856.5 863.7,856.7 843.7,867.2 843.3,867.4 842.9,867.5 842.5,867.7 842.1,867.8 841.7,868.0 841.3,868.1 840.9,868.2 840.5,868.2 840.0,868.3 839.6,868.3 839.1,868.3 838.7,868.3 838.2,868.3 837.8,868.3 837.3,868.3 836.8,868.2 836.4,868.1 835.9,868.0 835.4,867.9 834.9,867.8 834.5,867.7 834.0,867.5 833.5,867.3 833.0,867.1 832.5,866.9 832.0,866.7 831.5,866.5 831.0,866.2 830.6,865.9 830.1,865.7 829.6,865.4 829.1,865.1 828.6,864.7 828.1,864.4 827.6,864.0 827.2,863.7 826.7,863.3 826.2,862.9 825.8,862.5 825.3,862.0 824.8,861.6 824.4,861.2 823.9,860.7 823.5,860.2 823.0,859.8 822.6,859.3 822.2,858.8 821.8,858.3 821.3,857.7 820.9,857.2 820.5,856.7 820.1,856.1 819.8,855.6 819.4,855.0 819.0,854.4 818.7,853.8 818.3,853.2 818.0,852.7 817.6,852.1 817.3,851.5 817.0,850.8 816.7,850.2 816.4,849.6 816.1,849.0 815.8,848.4 815.6,847.7 815.3,847.1 815.1,846.5 814.9,845.8 814.6,845.2 814.4,844.6 814.2,843.9 814.1,843.3 813.9,842.7 813.7,842.0 813.6,841.4 813.4,840.7 813.3,840.1 813.2,839.5 813.1,838.9 813.0,838.2 813.0,837.6 812.9,837.0 812.9,836.4 812.8,835.8 812.8,835.2" fill="url(#cyl)" stroke="#111" stroke-width="1"/>
<line x1="829.7" y1="820.7" x2="849.7" y2="810.2" stroke="#1a1010" stroke-width="0.9"/>
<line x1="850.2" y1="853.2" x2="870.2" y2="842.7" stroke="#1a1010" stroke-width="0.9"/>
<ellipse cx="831.5" cy="844.0" rx="16.0" ry="26.2" transform="rotate(-27.7 831.5 844.0)" fill="#ffbfbf" stroke="#111" stroke-width="1"/>
<ellipse cx="832.1" cy="844.2" rx="11.6" ry="18.4" transform="rotate(-27.7 832.1 844.2)" fill="#6e5150" stroke="#111" stroke-width="1"/>
<ellipse cx="834.5" cy="843.5" rx="8.2" ry="17.0" transform="rotate(-27.7 834.5 843.5)" fill="#ffbfbf" stroke="#111" stroke-width="0.9"/>
<ellipse cx="835.8" cy="841.0" rx="7.6" ry="13.0" transform="rotate(-27.7 835.8 841.0)" fill="url(#olvs)" stroke="#111" stroke-width="0.9"/>
<polygon points="660.3,464.6 660.3,464.0 660.3,463.5 660.4,462.9 660.4,462.3 660.5,461.8 660.5,461.2 660.6,460.7 660.7,460.1 660.8,459.6 660.9,459.1 661.1,458.6 661.2,458.1 661.4,457.7 661.5,457.2 661.7,456.7 661.9,456.3 662.1,455.9 662.3,455.4 662.6,455.0 662.8,454.6 663.0,454.3 663.3,453.9 663.6,453.5 663.9,453.2 664.1,452.9 664.4,452.6 664.8,452.3 665.1,452.0 665.4,451.7 665.8,451.5 666.1,451.2 666.5,451.0 666.8,450.8 686.8,440.3 687.2,440.1 687.6,440.0 688.0,439.8 688.4,439.7 688.8,439.5 689.2,439.4 689.6,439.3 690.0,439.3 690.5,439.2 690.9,439.2 691.4,439.2 691.8,439.2 692.3,439.2 692.7,439.2 693.2,439.2 693.7,439.3 694.1,439.4 694.6,439.5 695.1,439.6 695.6,439.7 696.0,439.8 696.5,440.0 697.0,440.2 697.5,440.4 698.0,440.6 698.5,440.8 699.0,441.0 699.5,441.3 699.9,441.6 700.4,441.8 700.9,442.1 701.4,442.4 701.9,442.8 702.4,443.1 702.9,443.5 703.3,443.8 703.8,444.2 704.3,444.6 704.7,445.0 705.2,445.5 705.7,445.9 706.1,446.3 706.6,446.8 707.0,447.3 707.5,447.7 707.9,448.2 708.3,448.7 708.7,449.2 709.2,449.8 709.6,450.3 710.0,450.8 710.4,451.4 710.7,451.9 711.1,452.5 711.5,453.1 711.8,453.7 712.2,454.3 712.5,454.8 712.9,455.4 713.2,456.0 713.5,456.7 713.8,457.3 714.1,457.9 714.4,458.5 714.7,459.1 714.9,459.8 715.2,460.4 715.4,461.0 715.6,461.7 715.9,462.3 716.1,462.9 716.3,463.6 716.4,464.2 716.6,464.8 716.8,465.5 716.9,466.1 717.1,466.8 717.2,467.4 717.3,468.0 717.4,468.6 717.5,469.3 717.5,469.9 717.6,470.5 717.6,471.1 717.7,471.7 717.7,472.3 717.7,472.9 717.7,473.5 717.7,474.0 717.6,474.6 717.6,475.2 717.5,475.7 717.5,476.3 717.4,476.8 717.3,477.4 717.2,477.9 717.1,478.4 716.9,478.9 716.8,479.4 716.6,479.8 716.5,480.3 716.3,480.8 716.1,481.2 715.9,481.6 715.7,482.1 715.4,482.5 715.2,482.9 715.0,483.2 714.7,483.6 714.4,484.0 714.1,484.3 713.9,484.6 713.6,484.9 713.2,485.2 712.9,485.5 712.6,485.8 712.2,486.0 711.9,486.3 711.5,486.5 711.2,486.7 691.2,497.2 690.8,497.4 690.4,497.5 690.0,497.7 689.6,497.8 689.2,498.0 688.8,498.1 688.4,498.2 688.0,498.2 687.5,498.3 687.1,498.3 686.6,498.3 686.2,498.3 685.7,498.3 685.3,498.3 684.8,498.3 684.3,498.2 683.9,498.1 683.4,498.0 682.9,497.9 682.4,497.8 682.0,497.7 681.5,497.5 681.0,497.3 680.5,497.1 680.0,496.9 679.5,496.7 679.0,496.5 678.5,496.2 678.1,495.9 677.6,495.7 677.1,495.4 676.6,495.1 676.1,494.7 675.6,494.4 675.1,494.0 674.7,493.7 674.2,493.3 673.7,492.9 673.3,492.5 672.8,492.0 672.3,491.6 671.9,491.2 671.4,490.7 671.0,490.2 670.5,489.8 670.1,489.3 669.7,488.8 669.3,488.3 668.8,487.7 668.4,487.2 668.0,486.7 667.6,486.1 667.3,485.6 666.9,485.0 666.5,484.4 666.2,483.8 665.8,483.2 665.5,482.7 665.1,482.1 664.8,481.5 664.5,480.8 664.2,480.2 663.9,479.6 663.6,479.0 663.3,478.4 663.1,477.7 662.8,477.1 662.6,476.5 662.4,475.8 662.1,475.2 661.9,474.6 661.7,473.9 661.6,473.3 661.4,472.7 661.2,472.0 661.1,471.4 660.9,470.7 660.8,470.1 660.7,469.5 660.6,468.9 660.5,468.2 660.5,467.6 660.4,467.0 660.4,466.4 660.3,465.8 660.3,465.2" fill="url(#cyl)" stroke="#111" stroke-width="1"/>
<line x1="677.2" y1="450.7" x2="697.2" y2="440.2" stroke="#1a1010" stroke-width="0.9"/>
<line x1="697.7" y1="483.2" x2="717.7" y2="472.7" stroke="#1a1010" stroke-width="0.9"/>
<ellipse cx="679.0" cy="474.0" rx="16.0" ry="26.2" transform="rotate(-27.7 679.0 474.0)" fill="#ffbfbf" stroke="#111" stroke-width="1"/>
<ellipse cx="679.6" cy="474.2" rx="11.6" ry="18.4" transform="rotate(-27.7 679.6 474.2)" fill="#6e5150" stroke="#111" stroke-width="1"/>
<ellipse cx="682.0" cy="473.5" rx="8.2" ry="17.0" transform="rotate(-27.7 682.0 473.5)" fill="#ffbfbf" stroke="#111" stroke-width="0.9"/>
<ellipse cx="683.3" cy="471.0" rx="7.6" ry="13.0" transform="rotate(-27.7 683.3 471.0)" fill="url(#olvs)" stroke="#111" stroke-width="0.9"/>
<polygon points="736.8,508.1 736.8,507.5 736.8,507.0 736.9,506.4 736.9,505.8 737.0,505.3 737.0,504.7 737.1,504.2 737.2,503.6 737.3,503.1 737.4,502.6 737.6,502.1 737.7,501.6 737.9,501.2 738.0,500.7 738.2,500.2 738.4,499.8 738.6,499.4 738.8,498.9 739.1,498.5 739.3,498.1 739.5,497.8 739.8,497.4 740.1,497.0 740.4,496.7 740.6,496.4 740.9,496.1 741.3,495.8 741.6,495.5 741.9,495.2 742.3,495.0 742.6,494.7 743.0,494.5 743.3,494.3 763.3,483.8 763.7,483.6 764.1,483.5 764.5,483.3 764.9,483.2 765.3,483.0 765.7,482.9 766.1,482.8 766.5,482.8 767.0,482.7 767.4,482.7 767.9,482.7 768.3,482.7 768.8,482.7 769.2,482.7 769.7,482.7 770.2,482.8 770.6,482.9 771.1,483.0 771.6,483.1 772.1,483.2 772.5,483.3 773.0,483.5 773.5,483.7 774.0,483.9 774.5,484.1 775.0,484.3 775.5,484.5 776.0,484.8 776.4,485.1 776.9,485.3 777.4,485.6 777.9,485.9 778.4,486.3 778.9,486.6 779.4,487.0 779.8,487.3 780.3,487.7 780.8,488.1 781.2,488.5 781.7,489.0 782.2,489.4 782.6,489.8 783.1,490.3 783.5,490.8 784.0,491.2 784.4,491.7 784.8,492.2 785.2,492.7 785.7,493.3 786.1,493.8 786.5,494.3 786.9,494.9 787.2,495.4 787.6,496.0 788.0,496.6 788.3,497.2 788.7,497.8 789.0,498.3 789.4,498.9 789.7,499.5 790.0,500.2 790.3,500.8 790.6,501.4 790.9,502.0 791.2,502.6 791.4,503.3 791.7,503.9 791.9,504.5 792.1,505.2 792.4,505.8 792.6,506.4 792.8,507.1 792.9,507.7 793.1,508.3 793.3,509.0 793.4,509.6 793.6,510.3 793.7,510.9 793.8,511.5 793.9,512.1 794.0,512.8 794.0,513.4 794.1,514.0 794.1,514.6 794.2,515.2 794.2,515.8 794.2,516.4 794.2,517.0 794.2,517.5 794.1,518.1 794.1,518.7 794.0,519.2 794.0,519.8 793.9,520.3 793.8,520.9 793.7,521.4 793.6,521.9 793.4,522.4 793.3,522.9 793.1,523.3 793.0,523.8 792.8,524.3 792.6,524.7 792.4,525.1 792.2,525.6 791.9,526.0 791.7,526.4 791.5,526.7 791.2,527.1 790.9,527.5 790.6,527.8 790.4,528.1 790.1,528.4 789.7,528.7 789.4,529.0 789.1,529.3 788.7,529.5 788.4,529.8 788.0,530.0 787.7,530.2 767.7,540.7 767.3,540.9 766.9,541.0 766.5,541.2 766.1,541.3 765.7,541.5 765.3,541.6 764.9,541.7 764.5,541.7 764.0,541.8 763.6,541.8 763.1,541.8 762.7,541.8 762.2,541.8 761.8,541.8 761.3,541.8 760.8,541.7 760.4,541.6 759.9,541.5 759.4,541.4 758.9,541.3 758.5,541.2 758.0,541.0 757.5,540.8 757.0,540.6 756.5,540.4 756.0,540.2 755.5,540.0 755.0,539.7 754.6,539.4 754.1,539.2 753.6,538.9 753.1,538.6 752.6,538.2 752.1,537.9 751.6,537.5 751.2,537.2 750.7,536.8 750.2,536.4 749.8,536.0 749.3,535.5 748.8,535.1 748.4,534.7 747.9,534.2 747.5,533.7 747.0,533.3 746.6,532.8 746.2,532.3 745.8,531.8 745.3,531.2 744.9,530.7 744.5,530.2 744.1,529.6 743.8,529.1 743.4,528.5 743.0,527.9 742.7,527.3 742.3,526.7 742.0,526.2 741.6,525.6 741.3,525.0 741.0,524.3 740.7,523.7 740.4,523.1 740.1,522.5 739.8,521.9 739.6,521.2 739.3,520.6 739.1,520.0 738.9,519.3 738.6,518.7 738.4,518.1 738.2,517.4 738.1,516.8 737.9,516.2 737.7,515.5 737.6,514.9 737.4,514.2 737.3,513.6 737.2,513.0 737.1,512.4 737.0,511.7 737.0,511.1 736.9,510.5 736.9,509.9 736.8,509.3 736.8,508.7" fill="url(#cyl)" stroke="#111" stroke-width="1"/>
<line x1="753.7" y1="494.2" x2="773.7" y2="483.7" stroke="#1a1010" stroke-width="0.9"/>
<line x1="774.2" y1="526.7" x2="794.2" y2="516.2" stroke="#1a1010" stroke-width="0.9"/>
<ellipse cx="755.5" cy="517.5" rx="16.0" ry="26.2" transform="rotate(-27.7 755.5 517.5)" fill="#ffbfbf" stroke="#111" stroke-width="1"/>
<ellipse cx="756.1" cy="517.7" rx="11.6" ry="18.4" transform="rotate(-27.7 756.1 517.7)" fill="#6e5150" stroke="#111" stroke-width="1"/>
<ellipse cx="758.5" cy="517.0" rx="8.2" ry="17.0" transform="rotate(-27.7 758.5 517.0)" fill="#ffbfbf" stroke="#111" stroke-width="0.9"/>
<ellipse cx="759.8" cy="514.5" rx="7.6" ry="13.0" transform="rotate(-27.7 759.8 514.5)" fill="url(#olvs)" stroke="#111" stroke-width="0.9"/>
<polygon points="813.3,551.6 813.3,551.0 813.3,550.5 813.4,549.9 813.4,549.3 813.5,548.8 813.5,548.2 813.6,547.7 813.7,547.1 813.8,546.6 813.9,546.1 814.1,545.6 814.2,545.1 814.4,544.7 814.5,544.2 814.7,543.7 814.9,543.3 815.1,542.9 815.3,542.4 815.6,542.0 815.8,541.6 816.0,541.3 816.3,540.9 816.6,540.5 816.9,540.2 817.1,539.9 817.4,539.6 817.8,539.3 818.1,539.0 818.4,538.7 818.8,538.5 819.1,538.2 819.5,538.0 819.8,537.8 839.8,527.3 840.2,527.1 840.6,527.0 841.0,526.8 841.4,526.7 841.8,526.5 842.2,526.4 842.6,526.3 843.0,526.3 843.5,526.2 843.9,526.2 844.4,526.2 844.8,526.2 845.3,526.2 845.7,526.2 846.2,526.2 846.7,526.3 847.1,526.4 847.6,526.5 848.1,526.6 848.6,526.7 849.0,526.8 849.5,527.0 850.0,527.2 850.5,527.4 851.0,527.6 851.5,527.8 852.0,528.0 852.5,528.3 852.9,528.6 853.4,528.8 853.9,529.1 854.4,529.4 854.9,529.8 855.4,530.1 855.9,530.5 856.3,530.8 856.8,531.2 857.3,531.6 857.7,532.0 858.2,532.5 858.7,532.9 859.1,533.3 859.6,533.8 860.0,534.3 860.5,534.7 860.9,535.2 861.3,535.7 861.7,536.2 862.2,536.8 862.6,537.3 863.0,537.8 863.4,538.4 863.7,538.9 864.1,539.5 864.5,540.1 864.8,540.7 865.2,541.3 865.5,541.8 865.9,542.4 866.2,543.0 866.5,543.7 866.8,544.3 867.1,544.9 867.4,545.5 867.7,546.1 867.9,546.8 868.2,547.4 868.4,548.0 868.6,548.7 868.9,549.3 869.1,549.9 869.3,550.6 869.4,551.2 869.6,551.8 869.8,552.5 869.9,553.1 870.1,553.8 870.2,554.4 870.3,555.0 870.4,555.6 870.5,556.3 870.5,556.9 870.6,557.5 870.6,558.1 870.7,558.7 870.7,559.3 870.7,559.9 870.7,560.5 870.7,561.0 870.6,561.6 870.6,562.2 870.5,562.7 870.5,563.3 870.4,563.8 870.3,564.4 870.2,564.9 870.1,565.4 869.9,565.9 869.8,566.4 869.6,566.8 869.5,567.3 869.3,567.8 869.1,568.2 868.9,568.6 868.7,569.1 868.4,569.5 868.2,569.9 868.0,570.2 867.7,570.6 867.4,571.0 867.1,571.3 866.9,571.6 866.6,571.9 866.2,572.2 865.9,572.5 865.6,572.8 865.2,573.0 864.9,573.3 864.5,573.5 864.2,573.7 844.2,584.2 843.8,584.4 843.4,584.5 843.0,584.7 842.6,584.8 842.2,585.0 841.8,585.1 841.4,585.2 841.0,585.2 840.5,585.3 840.1,585.3 839.6,585.3 839.2,585.3 838.7,585.3 838.3,585.3 837.8,585.3 837.3,585.2 836.9,585.1 836.4,585.0 835.9,584.9 835.4,584.8 835.0,584.7 834.5,584.5 834.0,584.3 833.5,584.1 833.0,583.9 832.5,583.7 832.0,583.5 831.5,583.2 831.1,582.9 830.6,582.7 830.1,582.4 829.6,582.1 829.1,581.7 828.6,581.4 828.1,581.0 827.7,580.7 827.2,580.3 826.7,579.9 826.3,579.5 825.8,579.0 825.3,578.6 824.9,578.2 824.4,577.7 824.0,577.2 823.5,576.8 823.1,576.3 822.7,575.8 822.3,575.3 821.8,574.7 821.4,574.2 821.0,573.7 820.6,573.1 820.3,572.6 819.9,572.0 819.5,571.4 819.2,570.8 818.8,570.2 818.5,569.7 818.1,569.1 817.8,568.5 817.5,567.8 817.2,567.2 816.9,566.6 816.6,566.0 816.3,565.4 816.1,564.7 815.8,564.1 815.6,563.5 815.4,562.8 815.1,562.2 814.9,561.6 814.7,560.9 814.6,560.3 814.4,559.7 814.2,559.0 814.1,558.4 813.9,557.7 813.8,557.1 813.7,556.5 813.6,555.9 813.5,555.2 813.5,554.6 813.4,554.0 813.4,553.4 813.3,552.8 813.3,552.2" fill="url(#cyl)" stroke="#111" stroke-width="1"/>
<line x1="830.2" y1="537.7" x2="850.2" y2="527.2" stroke="#1a1010" stroke-width="0.9"/>
<line x1="850.7" y1="570.2" x2="870.7" y2="559.7" stroke="#1a1010" stroke-width="0.9"/>
<ellipse cx="832.0" cy="561.0" rx="16.0" ry="26.2" transform="rotate(-27.7 832.0 561.0)" fill="#ffbfbf" stroke="#111" stroke-width="1"/>
<ellipse cx="832.6" cy="561.2" rx="11.6" ry="18.4" transform="rotate(-27.7 832.6 561.2)" fill="#6e5150" stroke="#111" stroke-width="1"/>
<ellipse cx="835.0" cy="560.5" rx="8.2" ry="17.0" transform="rotate(-27.7 835.0 560.5)" fill="#ffbfbf" stroke="#111" stroke-width="0.9"/>
<ellipse cx="836.3" cy="558.0" rx="7.6" ry="13.0" transform="rotate(-27.7 836.3 558.0)" fill="url(#olvs)" stroke="#111" stroke-width="0.9"/>
<polygon points="745.5,590.2 765.6,578.0 765.6,590.2" fill="#ae7f7b"/>
<path d="M745.5,590.2 L765.6,578 L765.6,591" fill="none" stroke="#111" stroke-width="1"/>

<g fill="none" stroke-linecap="round">
<path d="M787.7,614.7 C775,612 758,618 748,636" stroke="#e01818" stroke-width="4"/>
<path d="M786,613.5 C775,612 760,617 751,630" stroke="#ff6060" stroke-width="1"/>
<path d="M742.5,633 L747,645 L753,634 Z" fill="#e01818" stroke="#e01818" stroke-width="1.5"/>
<path d="M763.1,697.3 C762,680 764,660 770,648 C775,637 780,630 784,625" stroke="#1c1ce6" stroke-width="3.8"/>
<path d="M764.5,690 C764,675 766,660 771,649" stroke="#8080ff" stroke-width="1"/>
<path d="M779.5,624 L788,618.5 L787.5,628.5 Z" fill="#1c1ce6" stroke="#1c1ce6" stroke-width="1.5"/>
<path d="M796,665.5 L761,654" stroke="#2a2aee" stroke-width="4"/>
<path d="M790,662.5 L766,655" stroke="#9090ff" stroke-width="1"/>
<path d="M763.5,648.5 L754,652.5 L761.5,659.5 Z" fill="#2a2aee" stroke="#2a2aee" stroke-width="1.5"/>
<path d="M799,663 L794,631" stroke="#22c022" stroke-width="4.2"/>
<path d="M788.5,632 L793,622 L799,631 Z" fill="#22c022" stroke="#22c022" stroke-width="1.5"/>
<path d="M745,651.6 C735,662 734,684 752,695" stroke="#22c022" stroke-width="3.8"/>
<path d="M748.5,689.5 L757.5,699.5 L755.5,691.5 Z" fill="#22c022" stroke="#22c022" stroke-width="2"/>
<path d="M796.5,669.2 L775,690" stroke="#b81010" stroke-width="4.5"/>
<path d="M771.5,684.5 L768.5,696 L779.5,692.5 Z" fill="#c01010" stroke="#c01010" stroke-width="1.5"/>
<circle cx="801" cy="667.4" r="5" fill="#e8e020" stroke="#b0a010" stroke-width="0.6"/>
</g>
</g>

<!-- annotation -->
<filter id="blur1" x="-20%" y="-50%" width="140%" height="200%"><feGaussianBlur stdDeviation="1.6"/></filter>
<g>
<text x="418" y="827.5" font-size="18" font-weight="bold" fill="#000" opacity="0.4" filter="url(#blur1)" textLength="151" lengthAdjust="spacingAndGlyphs">Camera Direction</text>
<text x="416.5" y="824.8" font-size="18" font-weight="bold" fill="#111" textLength="151" lengthAdjust="spacingAndGlyphs">Camera Direction</text>
<line x1="485" y1="805" x2="728" y2="699" stroke="#000" stroke-width="3.5" opacity="0.25" filter="url(#blur1)"/>
<line x1="483" y1="802" x2="724" y2="696" stroke="#e05050" stroke-width="3.2"/>
<path d="M734,691.5 L719,690 L725,702 Z" fill="#e05050"/>
</g>
<!-- triads -->
<g>
<path d="M876,828 L876,812" stroke="#0000c0" stroke-width="3"/>
<path d="M872,815 L876,801 L880,815 Z" fill="#0000c8"/>
<path d="M878,826 L892,819" stroke="#22c822" stroke-width="3.5"/>
<path d="M888,814 L900,815 L892,824 Z" fill="#22c822"/>
<path d="M878,829 L892,837" stroke="#dd1010" stroke-width="3.8"/>
<path d="M887,841 L900,843 L893,831 Z" fill="#dd1010"/>
<circle cx="875" cy="828.5" r="3" fill="#e0e0e0" stroke="#777" stroke-width="0.7"/>
<path d="M864,788.5 L873,788.5 L864,804.5 L873,804.5 M888,791.7 C886.2,787.7 879,787.7 879,796.5 C879,805.3 886.2,805.3 888,801.3 M892,804.5 L896.5,812.25 L901,804.5 M896.5,812.25 L896.5,820.0 M916,807.6 C914.2,803.725 907,803.725 907,812.25 C907,820.775 914.2,820.775 916,816.9 M892,838.5 L901,854.0 M901,838.5 L892,854.0 M916,841.6 C914.2,837.725 907,837.725 907,846.25 C907,854.775 914.2,854.775 916,850.9" fill="none" stroke="#111" stroke-width="1.1"/>
<path d="M156,923 L156,906" stroke="#0000c0" stroke-width="4"/>
<path d="M150.5,911 L156,895.5 L161.5,911 Z" fill="#0000c8"/>
<path d="M158,922 L172,914" stroke="#33ee33" stroke-width="4"/>
<path d="M167,909 L178.5,912 L171,920 Z" fill="#33ee33"/>
<path d="M157,926 L180,940" stroke="#dd1010" stroke-width="6"/>
<circle cx="155" cy="925" r="4" fill="#f0f0f0" stroke="#888" stroke-width="0.8"/>
<path d="M152,883.5 L161,883.5 L152,899.5 L161,899.5 M177,903.5 L181.5,911.5 L186,903.5 M181.5,911.5 L181.5,919.5 M181,935 L190,951 M190,935 L181,951" fill="none" stroke="#111" stroke-width="1.2"/>
</g>
<g id="leftpanel">
<rect x="0" y="497" width="24" height="8" fill="#e1e1e1" stroke="#adadad"/>
<rect x="-1" y="508.5" width="25" height="27" fill="#e1e1e1" stroke="#adadad"/>
<text x="-1.5" y="527" font-size="13.5" fill="#000">ls</text>
<path d="M0,551 L7,547 L19,548 L19,556 L12,559 L0,557 Z M0,551 L12,553 L19,548 M12,553 L12,559" fill="none" stroke="#9a9a9a" stroke-width="0.9"/>
<path d="M0.5,560 L8,556 L15,560 L8,564.5 Z" fill="#6a8ad8" stroke="#3a4a90" stroke-width="0.6"/>
<path d="M15.5,563 L19,565 L15.5,567 Z" fill="#1a7ad0"/>
<path d="M33,548 L35,548 M33,552 L33,554 M33,558 L33,560 M33,566 L35,566" stroke="#222" stroke-width="1"/>
<path d="M34,553 L40,549 L43,550 L43,564 L37,565 L34,561 Z" fill="#8fa0d8" stroke="#2a3470" stroke-width="0.7"/>
<path d="M0,584 L7,578 L15,580 L19,587 L19,592 L6,599 L0,596 Z" fill="#c8d4f0" stroke="#2a3470" stroke-width="0.8"/>
<path d="M0,585 L7,579 L15,581 L18.5,588 L6,591 L1,588 Z" fill="#1a50b0"/>
<path d="M15.5,594 L19,596 L15.5,598 Z" fill="#1a7ad0"/>
<path d="M33,587 L43,580 L43,594 L37,595 Z" fill="#eef0f8" stroke="#556" stroke-width="0.7"/>
<path d="M36,589 L43,585 M37,592 L43,588" stroke="#667" stroke-width="0.6"/>
<path d="M6,609 L6,618 M6,618 L0,622" stroke="#3a8ae0" stroke-width="1.3"/>
<path d="M5,608 L6,606 L7,608 Z" fill="#3a8ae0"/>
<path d="M6,618 L15,623.5" stroke="#111" stroke-width="1.6"/>
<path d="M13,625 L17.5,625 L15,621 Z" fill="#111"/>
<path d="M15.5,626 L19,628 L15.5,630 Z" fill="#1a7ad0"/>
<path d="M35,609 L43,612 L43,626 L38,620 Z" fill="#e0d850" stroke="#777" stroke-width="0.5"/>
<path d="M35,609 L43,622" stroke="#1a2a80" stroke-width="1.1"/>
<path d="M35,622 L37,617 L40,622 M37,617 L37,612" stroke="#8a8aa0" stroke-width="1" fill="none"/>
</g>
<!-- Camera Eye window -->
<g id="ceye">
<rect x="-5" y="0" width="688" height="501" fill="#000" opacity="0.5" filter="url(#shd2)"/>
<rect x="0" y="0" width="681" height="2" fill="#e6e6e6"/>
<rect x="0" y="2" width="682" height="495" fill="#a6a6a6"/>
<rect x="0" y="3" width="681" height="494" fill="#ffffff"/>
<text x="7.5" y="27" font-size="14.6" fill="#a0a4aa" textLength="77" lengthAdjust="spacingAndGlyphs">Camera Eye</text>
<text x="5" y="58" font-size="14.5" fill="#6d6d6d">View</text>
<text x="51" y="58" font-size="14.5" fill="#6d6d6d">Options</text>
<rect x="0" y="65" width="660" height="1" fill="#a0a0a0"/>
<rect x="0" y="66" width="660" height="29" fill="#f0f0f0"/>
<rect x="0" y="95" width="660" height="1" fill="#6b6b6b"/>
<rect x="660" y="66" width="21" height="431" fill="#f0f0f0"/>
<rect x="0" y="474" width="660" height="23" fill="#f0f0f0"/>
<rect x="0" y="474" width="660" height="2" fill="#ffffff"/>
<rect x="659" y="96" width="1.5" height="380" fill="#ffffff"/>
<g id="cev">
<svg x="0" y="96" width="659" height="378" viewBox="0 96 659 378" style="position:static">
<rect x="0" y="96" width="659" height="378" fill="url(#ceg)"/>
<polygon points="126,92 150,138 175,167 435.5,187.7 447.3,92" fill="url(#cebr)" stroke="#111" stroke-width="1"/>
<polygon points="446.8,96 659,96 659,474 403,474 409,419 429,252 435.5,187.7" fill="url(#ceye)"/>
<polygon points="175,167 435.5,187.7 409,419 159,381" fill="#fdf0f0" stroke="#111" stroke-width="1"/>
<polygon points="159,381 409,419 402,476 -2,476 -2,459" fill="#7a5654" stroke="#111" stroke-width="1"/>
<path d="M85,416.5 L91.8,408.4 L106,397.5 L117.7,394.8 L122.5,395.4 L125.9,397 Z" fill="#9c7472" stroke="#111" stroke-width="1"/><path d="M110,396.5 L118,399" stroke="#111" stroke-width="0.9"/>
<line x1="446.8" y1="96" x2="403" y2="474" stroke="#111" stroke-width="1.1"/>
<line x1="429" y1="252" x2="659" y2="276" stroke="#111" stroke-width="1"/>
</svg>
</g>
<!-- scroll bits -->
<path d="M665,79 L670,74 L675,79" fill="none" stroke="#606060" stroke-width="2.2"/>
<path d="M665,463 L670,468 L675,463" fill="none" stroke="#606060" stroke-width="2.2"/>
<rect x="661" y="260" width="19" height="21" fill="#cdcdcd"/>
<path d="M11,481 L6,486 L11,491" fill="none" stroke="#606060" stroke-width="2.2"/>
<path d="M647,481 L652,486 L647,491" fill="none" stroke="#606060" stroke-width="2.2"/>
<rect x="591" y="477" width="21" height="19" fill="#cdcdcd"/>
<g fill="#c4c4c4"><rect x="676" y="483.5" width="2.6" height="2.6"/><rect x="672.5" y="487" width="2.6" height="2.6"/><rect x="676" y="487" width="2.6" height="2.6"/><rect x="669" y="490.5" width="2.6" height="2.6"/><rect x="672.5" y="490.5" width="2.6" height="2.6"/><rect x="676" y="490.5" width="2.6" height="2.6"/></g>
<!-- zoom icons -->
<rect x="7" y="72" width="16" height="16" fill="#fafafa"/>
<rect x="30" y="72" width="16" height="16" fill="#fafafa"/>
<g stroke="#000" stroke-width="1.2" fill="none"><circle cx="13" cy="79" r="4.5"/><line x1="10.5" y1="79" x2="15.5" y2="79"/><line x1="13" y1="76.5" x2="13" y2="81.5"/>
<circle cx="36" cy="79" r="4.5"/><line x1="33.5" y1="79" x2="38.5" y2="79"/></g>
<g stroke="#7a0000" stroke-width="2.2"><line x1="16.5" y1="82.5" x2="20.5" y2="86.5"/><line x1="39.5" y1="82.5" x2="43.5" y2="86.5"/></g>
</g>

<!-- Camera Settings dialog -->
<g id="dlg">
<rect x="43" y="502" width="386" height="291" fill="#000" opacity="0.5" filter="url(#shd2)"/>
<rect x="43" y="501" width="382" height="288" fill="#8a8a8a"/>
<rect x="44" y="502" width="380" height="37" fill="#ffffff"/>
<rect x="44" y="539" width="380" height="249" fill="#f0f0f0"/>
<text x="53.5" y="526" font-size="14.6" fill="#9a9a9a" textLength="107" lengthAdjust="spacingAndGlyphs">Camera Settings</text>
<path d="M397,514 L409,526 M409,514 L397,526" stroke="#555" stroke-width="1"/>
<g font-size="12.3" fill="#000">
<text x="56.3" y="566">Tilt</text>
<text x="74.7" y="593.7">Max Degree</text>
<text x="91.8" y="617.3">Horizontal</text>
<text x="168.4" y="617.3">+-</text>
<text x="91.6" y="645.3">Vertical</text>
<text x="168.4" y="645.3">+-</text>
<text x="56.5" y="673.5">Scope</text>
<text x="74.5" y="703.3">Color</text>
<text x="74.5" y="734">Transparency</text>
<text x="74.5" y="761.8">Display Size</text>
<text x="242.4" y="762">%</text>
</g>
<rect x="79" y="563" width="239" height="1" fill="#a0a0a0"/>
<rect x="96" y="671" width="314" height="1" fill="#a0a0a0"/>
<rect x="184.5" y="601.5" width="69" height="23" fill="#fff" stroke="#7a7a7a" stroke-width="1"/>
<rect x="184.5" y="629.5" width="69" height="23" fill="#fff" stroke="#7a7a7a" stroke-width="1"/>
<rect x="272.5" y="715.5" width="52" height="23" fill="#fff" stroke="#7a7a7a" stroke-width="1"/>
<rect x="167.5" y="745.5" width="69" height="23" fill="#fff" stroke="#7a7a7a" stroke-width="1"/>
<g font-size="12.3" fill="#000">
<text x="190" y="617.5">45</text><text x="190" y="645.5">45</text><text x="278.3" y="732">50</text><text x="173.7" y="762">75</text>
</g>
<rect x="325.5" y="554.5" width="85" height="25" fill="#e1e1e1" stroke="#adadad"/>
<rect x="325.5" y="590.5" width="85" height="25" fill="#e1e1e1" stroke="#adadad"/>
<text x="368" y="571.5" font-size="12.3" text-anchor="middle">OK</text>
<text x="368" y="607.5" font-size="12.3" text-anchor="middle">Cancel</text>
<rect x="168.5" y="686.5" width="50" height="21" fill="#e1e1e1" stroke="#adadad"/>
<rect x="173.5" y="690.5" width="30" height="13" fill="#7f7f7f" stroke="#111" stroke-width="1"/>
<rect x="207" y="689" width="1" height="15" fill="#aaa"/>
<path d="M210,695 L215,695 L212.5,698 Z" fill="#000"/>
<rect x="172.5" y="725.5" width="90" height="4" fill="#e7e7e7" stroke="#d6d6d6"/>
<rect x="213" y="719" width="8" height="17" fill="#0078d7"/>
</g>
</svg>
</body></html>
